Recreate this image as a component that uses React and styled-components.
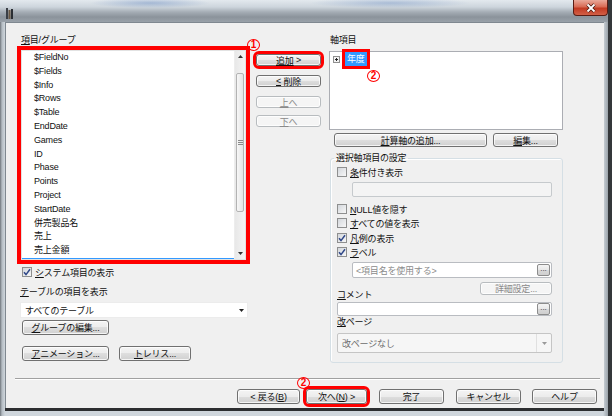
import React from 'react';
import styled, { createGlobalStyle } from 'styled-components';

const GlobalStyle = createGlobalStyle`
  html, body { margin: 0; padding: 0; }
  * { box-sizing: border-box; }
  body {
    width: 612px;
    height: 416px;
    overflow: hidden;
    background: #34373a;
    font-family: 'Liberation Sans', 'Noto Sans CJK JP', sans-serif;
    font-size: 9px;
    letter-spacing: -0.2px;
    color: #111;
  }
`;

const Window = styled.div`
  width: 608px;
  height: 416px;
  padding-bottom: 8px;
  display: flex;
  flex-direction: column;
  background: linear-gradient(to right, #6f757b 0, #b4bcc3 2px, #cfd6dc 5px, #cfd6dc 603px, #9aa2a9 608px);
`;

const TitleBar = styled.div`
  height: 22px;
  flex: none;
  display: flex;
  align-items: flex-start;
  background:
    radial-gradient(ellipse 60px 5px at 150px 3px, rgba(100, 135, 190, 0.45), transparent),
    radial-gradient(ellipse 80px 5px at 390px 3px, rgba(100, 135, 190, 0.4), transparent),
    linear-gradient(to bottom, #e3e9ee 0, #cdd5dc 7px, #a5adb5 12px, #8b939b 17px, #99a1a9 22px);
`;

const TitleIcon = styled.span`
  margin: 8px 0 0 6px;
  display: flex;
`;

const CloseButton = styled.span`
  margin-left: auto;
  width: 35px;
  height: 16px;
  display: flex;
  align-items: center;
  justify-content: center;
  border: 1px solid #5a1d14;
  border-top: none;
  border-radius: 0 0 4px 4px;
  background: linear-gradient(to bottom, #e9a99a 0, #d86b55 45%, #c23a22 55%, #d26047 100%);
`;

const Client = styled.div`
  flex: 1;
  margin: 0 4px 0 5px;
  background: #f0f0f0;
  border-top: 1px solid #7f8890;
  border-left: 1px solid #7f8890;
  box-shadow: 0 3px 0 #2c2e30;
  display: flex;
  flex-direction: column;
`;

const Main = styled.div`
  flex: 1;
  display: flex;
  align-items: flex-start;
  padding: 11px 0 0 15px;
`;

const Column = styled.div`
  flex: none;
  display: flex;
  flex-direction: column;
  align-items: flex-start;
  width: ${p => p.$w}px;
  margin-left: ${p => p.$ml || 0}px;
  padding-top: ${p => p.$pt || 0}px;
`;

const Label = styled.div`
  height: 12px;
  line-height: 12px;
  white-space: nowrap;
  margin-top: ${p => p.$mt || 0}px;
  margin-left: ${p => p.$ml || 0}px;
`;

const Key = styled.u`
  text-decoration-thickness: 1px;
  text-underline-offset: 1px;
`;

const ListBox = styled.div`
  width: 225px;
  height: 210px;
  margin-top: 4px;
  display: flex;
  background: #fff;
  border: 1px solid #e2e2e2;
  outline: 4px solid #ff0000;
`;

const Items = styled.div`
  flex: 1;
  overflow: hidden;
`;

const Item = styled.div`
  height: 13.8px;
  line-height: 13.8px;
  padding-left: 12px;
  white-space: nowrap;
  background: ${p => (p.$selected ? '#3399ff' : 'transparent')};
  color: ${p => (p.$selected ? '#fff' : '#111')};
`;

const ScrollBar = styled.div`
  width: 11px;
  flex: none;
  display: flex;
  flex-direction: column;
  background: linear-gradient(to right, #e8e8e8, #f4f4f4);
  border-left: 1px solid #ededed;
`;

const ScrollArrow = styled.div`
  height: 11px;
  flex: none;
  display: flex;
  align-items: center;
  justify-content: center;
`;

const Track = styled.div`
  flex: 1;
  padding-top: 11px;
`;

const Thumb = styled.div`
  height: 139px;
  margin: 0 1px;
  border: 1px solid #b3b3b3;
  border-radius: 2px;
  background: linear-gradient(to right, #f7f7f7, #e3e3e3);
  display: flex;
  align-items: center;
  justify-content: center;
`;

const CheckRow = styled.div`
  display: flex;
  align-items: center;
  gap: 3px;
  height: 12px;
  white-space: nowrap;
  margin-top: ${p => p.$mt || 0}px;
  margin-left: ${p => p.$ml || 0}px;
`;

const CheckBox = styled.span`
  width: 10px;
  height: 10px;
  flex: none;
  display: flex;
  align-items: center;
  justify-content: center;
  border: 1px solid #8e8f8f;
  background: linear-gradient(135deg, #d3d7dc, #f7f7f7);
`;

const Combo = styled.div`
  width: ${p => p.$w}px;
  height: ${p => p.$h}px;
  margin-top: ${p => p.$mt || 0}px;
  margin-left: ${p => p.$ml || 0}px;
  display: flex;
  align-items: center;
  justify-content: space-between;
  padding: 0 3px 0 4px;
  background: ${p => (p.$disabled ? '#f6f6f6' : '#fff')};
  border: 1px solid ${p => (p.$disabled ? '#c5c5c5' : '#ececec')};
  border-radius: ${p => (p.$disabled ? 2 : 0)}px;
  color: ${p => (p.$disabled ? '#6d6d6d' : '#111')};
`;

const ComboDrop = styled.span`
  align-self: stretch;
  width: 15px;
  margin-right: -3px;
  display: flex;
  align-items: center;
  justify-content: center;
  border-left: ${p => (p.$split ? '1px solid #e0e0e0' : 'none')};
`;

const Button = styled.button`
  width: ${p => p.$w}px;
  height: ${p => p.$h || 15}px;
  margin-top: ${p => p.$mt || 0}px;
  margin-left: ${p => p.$ml || 0}px;
  padding: 0;
  display: flex;
  align-items: center;
  justify-content: center;
  font: inherit;
  letter-spacing: inherit;
  white-space: nowrap;
  border: 1px solid ${p => (p.disabled ? '#b8bcbf' : '#707070')};
  border-radius: 3px;
  background: ${p =>
    p.disabled
      ? '#f5f5f5'
      : 'linear-gradient(to bottom, #f4f4f4 0%, #ececec 50%, #dedede 50%, #d0d0d0 100%)'};
  box-shadow: inset 0 0 0 1px rgba(255, 255, 255, 0.75);
  color: ${p => (p.disabled ? '#8a8a8a' : '#111')};
  outline: ${p => (p.$mark ? '3px solid #ff0000' : 'none')};
`;

const MarkWrap = styled.div`
  position: relative;
  margin-left: ${p => p.$ml || 0}px;
`;

const Badge = styled.span`
  position: absolute;
  left: ${p => p.$x}px;
  top: ${p => p.$y}px;
  width: 13px;
  height: 12px;
  display: flex;
  align-items: center;
  justify-content: center;
  border: 1.6px solid #ff0000;
  border-radius: 50%;
  color: #ff0000;
  font-family: 'Liberation Sans', sans-serif;
  font-size: 10px;
  line-height: 10px;
  font-weight: bold;
  letter-spacing: 0;
`;

const Tree = styled.div`
  width: 234px;
  height: 79px;
  margin-top: 5px;
  background: #fff;
  border: 1px solid #abadb3;
`;

const TreeRow = styled.div`
  display: flex;
  align-items: center;
  gap: 5px;
  height: 14px;
  padding-left: 3px;
`;

const TreeSel = styled.span`
  position: relative;
  height: 14px;
  line-height: 14px;
  padding: 0 2px;
  background: #3399ff;
  color: #fff;
  outline: 3px solid #ff0000;
`;

const ButtonRow = styled.div`
  display: flex;
  gap: ${p => p.$gap || 0}px;
  margin-top: ${p => p.$mt || 0}px;
  padding-left: ${p => p.$pl || 0}px;
`;

const Group = styled.fieldset`
  width: 233px;
  margin: 5px 0 0 1px;
  padding: 0 6px 9px;
  min-width: 0;
  border: 1px solid #d5dfe5;
  border-radius: 3px;
  box-shadow: inset 1px 1px 0 #fff;
`;

const Legend = styled.legend`
  height: 12px;
  line-height: 12px;
  padding: 0 2px;
  margin-left: -3px;
`;

const GroupBody = styled.div`
  display: flex;
  flex-direction: column;
  align-items: flex-start;
`;

const Field = styled.div`
  width: ${p => p.$w}px;
  height: ${p => p.$h}px;
  margin-top: ${p => p.$mt || 0}px;
  margin-left: ${p => p.$ml || 0}px;
  display: flex;
  align-items: center;
  padding: 0 1px 0 3px;
  border: 1px solid ${p => (p.$disabled ? '#c6cacd' : '#b9bcc1')};
  border-radius: 2px;
  background: ${p => (p.$disabled ? '#f4f4f4' : '#fff')};
  color: #8c8c8c;
  white-space: nowrap;
`;

const DotsButton = styled.span`
  margin-left: auto;
  width: 13px;
  height: 12px;
  display: flex;
  align-items: flex-end;
  justify-content: center;
  padding-bottom: 2px;
  font-size: 8px;
  line-height: 8px;
  letter-spacing: 0;
  color: #333;
  border: 1px solid #8c8c8c;
  border-radius: 2px;
  background: linear-gradient(to bottom, #f4f4f4 0%, #e8e8e8 50%, #d8d8d8 51%, #cfcfcf 100%);
`;

const DetailRow = styled.div`
  width: 215px;
  height: 19px;
  margin-top: 4px;
  display: flex;
  justify-content: space-between;
  align-items: flex-start;
`;

const Footer = styled.div`
  flex: none;
  display: flex;
  flex-direction: column;
`;

const Separator = styled.div`
  height: 2px;
  margin: 0 4px 0 9px;
  border-top: 1px solid #a0a0a0;
  border-bottom: 1px solid #fff;
`;

const FooterButtons = styled.div`
  display: flex;
  justify-content: flex-end;
  align-items: center;
  height: 15px;
  margin: 9px 0 4px;
  padding-right: 7px;
`;

const Check = () => (
  <svg width="8" height="8" viewBox="0 0 8 8">
    <path d="M1 4.2 L3 6.6 L7 1.2" fill="none" stroke="#2f4788" strokeWidth="1.5" />
  </svg>
);

const ArrowDown = ({ color = '#222' }) => (
  <svg width="5" height="3" viewBox="0 0 5 3">
    <path d="M0 0H5L2.5 3Z" fill={color} />
  </svg>
);

const ArrowUp = () => (
  <svg width="5" height="3" viewBox="0 0 5 3">
    <path d="M0 3H5L2.5 0Z" fill="#333" />
  </svg>
);

const Box = ({ checked }) => <CheckBox>{checked && <Check />}</CheckBox>;

const fields = [
  '$FieldNo', '$Fields', '$Info', '$Rows', '$Table', 'EndDate', 'Games', 'ID',
  'Phase', 'Points', 'Project', 'StartDate', '併売製品名', '売上', '売上金額', '日付',
];

const App = () => {
  return (
    <>
      <GlobalStyle />
      <Window>
        <TitleBar>
          <TitleIcon>
            <svg width="7" height="11" viewBox="0 0 7 11">
              <rect x="0" y="0" width="2" height="11" fill="#3a3f46" />
              <rect x="2.5" y="2" width="2" height="9" fill="#6a5844" />
              <rect x="5" y="1" width="2" height="10" fill="#2a2e33" />
            </svg>
          </TitleIcon>
          <CloseButton>
            <svg width="12" height="10" viewBox="0 0 12 10">
              <path d="M2.5 1.5 L9.5 8.5 M9.5 1.5 L2.5 8.5" stroke="#4a1a10" strokeWidth="3.4" />
              <path d="M2.5 1.5 L9.5 8.5 M9.5 1.5 L2.5 8.5" stroke="#fff" strokeWidth="1.8" />
            </svg>
          </CloseButton>
        </TitleBar>

        <Client>
          <Main>
            <Column $w={225}>
              <Label><Key>項</Key>目/グループ</Label>
              <ListBox>
                <Items>
                  {fields.map((f, i) => (
                    <Item key={f} $selected={i === fields.length - 1}>{f}</Item>
                  ))}
                </Items>
                <ScrollBar>
                  <ScrollArrow><ArrowUp /></ScrollArrow>
                  <Track>
                    <Thumb>
                      <svg width="5" height="5" viewBox="0 0 5 5">
                        <path d="M0 0.5H5M0 2.5H5M0 4.5H5" stroke="#8a8a8a" strokeWidth="1" />
                      </svg>
                    </Thumb>
                  </Track>
                  <ScrollArrow><ArrowDown color="#333" /></ScrollArrow>
                </ScrollBar>
              </ListBox>
              <CheckRow $mt={6} $ml={1}>
                <Box checked />
                <span><Key>シ</Key>ステム項目の表示</span>
              </CheckRow>
              <Label $mt={8} $ml={-1}><Key>テ</Key>ーブルの項目を表示</Label>
              <Combo $w={228} $h={16} $mt={4} $ml={-1}>
                <span>すべてのテーブル</span>
                <ArrowDown />
              </Combo>
              <Button $w={87} $mt={2} $ml={1}><Key>グ</Key>ループの編集...</Button>
              <ButtonRow $gap={10} $mt={11} $pl={1}>
                <Button $w={87}><Key>ア</Key>ニメーション...</Button>
                <Button $w={72}><Key>ト</Key>レリス...</Button>
              </ButtonRow>
            </Column>

            <Column $w={65} $ml={10} $pt={20}>
              <MarkWrap>
                <Button $w={65} $h={12} $mark><Key>追加</Key>&nbsp;&gt;</Button>
                <Badge $x={-9} $y={-15}>1</Badge>
              </MarkWrap>
              <Button $w={65} $h={12} $mt={9}><Key>&lt;</Key>&nbsp;削除</Button>
              <Button $w={65} $h={12} $mt={9} disabled><Key>上</Key>へ</Button>
              <Button $w={65} $h={12} $mt={7} disabled><Key>下</Key>へ</Button>
            </Column>

            <Column $w={234} $ml={8}>
              <Label $ml={1}>軸項目</Label>
              <Tree>
                <TreeRow>
                  <svg width="7" height="7" viewBox="0 0 7 7">
                    <rect x="0.5" y="0.5" width="6" height="6" fill="#f2f2f2" stroke="#8f8f8f" />
                    <path d="M2 3.5H5M3.5 2V5" stroke="#222" strokeWidth="1" />
                  </svg>
                  <TreeSel>
                    年度
                    <Badge $x={22} $y={18}>2</Badge>
                  </TreeSel>
                </TreeRow>
              </Tree>
              <ButtonRow $gap={6} $mt={3} $pl={5}>
                <Button $w={153} $h={14}><Key>計</Key>算軸の追加...</Button>
                <Button $w={65} $h={14}><Key>編</Key>集...</Button>
              </ButtonRow>
              <Group>
                <Legend>選択軸項目の設定</Legend>
                <GroupBody>
                  <CheckRow $mt={2}>
                    <Box />
                    <span><Key>条</Key>件付き表示</span>
                  </CheckRow>
                  <Field $w={200} $h={15} $mt={4} $ml={15} $disabled />
                  <CheckRow $mt={6}>
                    <Box />
                    <span><Key>N</Key>ULL値を隠す</span>
                  </CheckRow>
                  <CheckRow $mt={2}>
                    <Box />
                    <span><Key>す</Key>べての値を表示</span>
                  </CheckRow>
                  <CheckRow $mt={3}>
                    <Box checked />
                    <span><Key>凡</Key>例の表示</span>
                  </CheckRow>
                  <CheckRow $mt={2}>
                    <Box checked />
                    <span><Key>ラ</Key>ベル</span>
                  </CheckRow>
                  <Field $w={200} $h={16} $mt={4} $ml={15}>
                    <span>&lt;項目名を使用する&gt;</span>
                    <DotsButton>...</DotsButton>
                  </Field>
                  <DetailRow>
                    <Label $mt={7}><Key>コ</Key>メント</Label>
                    <Button $w={72} $h={13} disabled>詳細設定...</Button>
                  </DetailRow>
                  <Field $w={215} $h={14} $mt={1}>
                    <DotsButton>...</DotsButton>
                  </Field>
                  <Label><Key>改</Key>ページ</Label>
                  <Combo $w={215} $h={20} $mt={5} $disabled>
                    <span>改ページなし</span>
                    <ComboDrop $split><ArrowDown color="#9a9a9a" /></ComboDrop>
                  </Combo>
                </GroupBody>
              </Group>
            </Column>
          </Main>

          <Footer>
            <Separator />
            <FooterButtons>
              <Button $w={63}>&lt; 戻る(<Key>B</Key>)</Button>
              <MarkWrap $ml={6}>
                <Button $w={61} $mark>次へ(<Key>N</Key>) &gt;</Button>
                <Badge $x={-9} $y={-12}>2</Badge>
              </MarkWrap>
              <Button $w={65} $ml={12}>完了</Button>
              <Button $w={65} $ml={12}>キャンセル</Button>
              <Button $w={65} $ml={11}>ヘルプ</Button>
            </FooterButtons>
          </Footer>
        </Client>
      </Window>
    </>
  );
};

export default App;
